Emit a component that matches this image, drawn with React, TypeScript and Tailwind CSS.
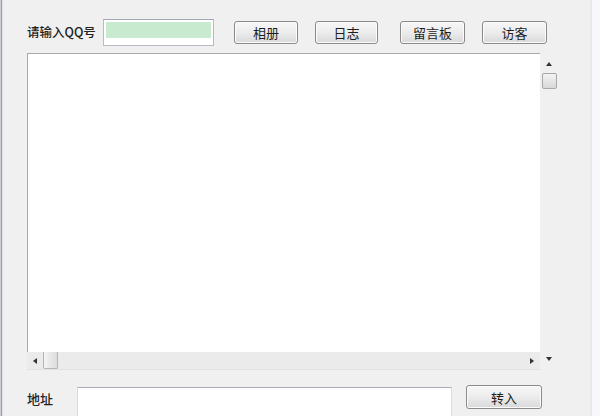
import React from "react";

const FONT = { fontFamily: '"Noto Sans CJK SC", "Liberation Sans", sans-serif' };

function Btn({ label, w, ml }: { label: string; w: string; ml: string }) {
	return (
		<button
			className={`${w} ${ml} h-[23px] shrink-0 rounded-[3px] border border-[#8a8a8a] bg-gradient-to-b from-[#f7f7f7] via-[#ececec] to-[#d9d9d9] text-[13px] leading-none text-[#1e1e1e] shadow-[inset_0_0_0_1px_#fcfcfc]`}
		>
			{label}
		</button>
	);
}

export default function App() {
	return (
		<div
			className="flex h-[416px] w-[600px] overflow-hidden bg-[#f0f0f0] text-[#222]"
			style={FONT}
		>
			{/* window left edge */}
			<div className="flex w-[3px] shrink-0">
				<div className="w-[1px] bg-[#c9ccd1]" />
				<div className="w-[1px] bg-[#9aa1aa]" />
				<div className="w-[1px] bg-[#dfe1e4]" />
			</div>

			<div className="flex w-[587px] shrink-0 flex-col">
				{/* top row */}
				<div className="flex h-[27px] items-center pl-[24px] mt-[19px]">
					<span className="w-[76px] shrink-0 text-[12.5px] font-medium">请输入QQ号</span>
					<div className="h-[27px] w-[111px] shrink-0 border border-[#b6bcc6] border-t-[#a3a9b4] bg-white p-[2px]">
						<div className="h-[16px] bg-[#c8ebcf]" />
					</div>
					<Btn label="相册" w="w-[64px]" ml="ml-[20px]" />
					<Btn label="日志" w="w-[63px]" ml="ml-[17px]" />
					<Btn label="留言板" w="w-[65px]" ml="ml-[22px]" />
					<Btn label="访客" w="w-[65px]" ml="ml-[17px]" />
				</div>

				{/* text area with scrollbars */}
				<div className="ml-[24px] mt-[7px] flex">
					<div className="flex w-[513px] flex-col">
						<div className="h-[299px] border-l border-t border-[#a9a9a9] bg-white" />
						<div className="flex h-[18px] items-center border-b border-[#e2e2e2] bg-[#ebebeb]">
							<span className="ml-[6px] h-0 w-0 border-y-[3px] border-r-[4px] border-y-transparent border-r-[#333]" />
							<div className="ml-[6px] h-[17px] w-[15px] self-start rounded-b-[2px] border border-t-0 border-[#b5b5b5] bg-gradient-to-r from-[#f3f3f3] to-[#dcdcdc]" />
							<span className="ml-auto mr-[6px] h-0 w-0 border-y-[3px] border-l-[4px] border-y-transparent border-l-[#333]" />
						</div>
					</div>
					<div className="flex w-[18px] flex-col items-center bg-[#f0f0f0]">
						<span className="mt-[9px] h-0 w-0 border-x-[3px] border-b-[4px] border-x-transparent border-b-[#333]" />
						<div className="mt-[7px] h-[16px] w-[15px] rounded-[2px] border border-[#a8a8a8] bg-gradient-to-b from-[#f3f3f3] to-[#d8d8d8]" />
						<span className="mt-auto mb-[9px] h-0 w-0 border-x-[3px] border-t-[4px] border-x-transparent border-t-[#333]" />
					</div>
				</div>

				{/* bottom row */}
				<div className="mt-[15px] flex items-start pl-[24px]">
					<span className="mt-[4px] w-[50px] shrink-0 text-[13px] font-medium">地址</span>
					<div className="mt-[2px] h-[32px] w-[375px] shrink-0 border border-[#d8dbe0] border-t-[#a9aeb6] bg-white" />
					<Btn label="转入" w="w-[76px]" ml="ml-[14px] h-[24px]" />
				</div>
			</div>

			{/* window right edge */}
			<div className="flex flex-1">
				<div className="w-[2px] bg-[#e6e8eb]" />
				<div className="flex-1 bg-[#f6f8fb]" />
			</div>
		</div>
	);
}
